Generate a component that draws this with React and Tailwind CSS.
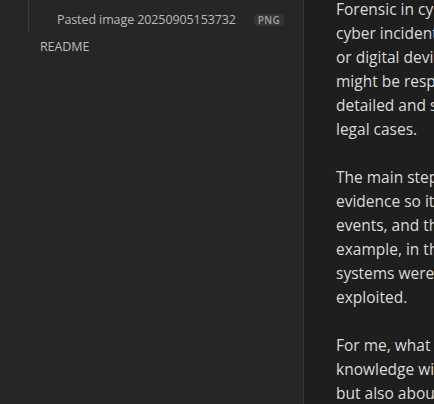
const paragraphs = [
  [
    'Forensic in cybersecurity is the process of investigating a',
    'cyber incident by collecting and analyzing evidence from systems',
    'or digital devices. The goal is to find out what happened, who',
    'might be responsible, and how it happened, while keeping a',
    'detailed and secure record so the evidence can be used in',
    'legal cases.',
  ],
  [
    'The main steps are identifying, preserving, and analyzing the',
    'evidence so it stays reliable, then reconstructing the timeline of',
    'events, and then reporting the findings clearly. For',
    'example, in the lab, we looked at logs to see which',
    'systems were accessed and how the vulnerability was',
    'exploited.',
  ],
  [
    'For me, what I learned is that forensics is not only about',
    'knowledge with tools and logs, and understanding systems,',
    'but also about patience, documentation and careful thinking.',
  ],
];

export default function App() {
  return (
    <div
      className="flex h-[404px] w-[434px] overflow-hidden bg-[#1e1e1e]"
      style={{ fontFamily: '"Open Sans", "Noto Sans", sans-serif' }}
    >
      {/* File explorer */}
      <aside className="w-[304px] shrink-0 border-r border-[#363636] bg-[#262626] text-[12.5px] tracking-[-0.1px] text-[#bababa]">
        <div className="ml-[28px] h-[32px] border-l border-[#3c3c3c] pt-[7px]">
          <div className="flex items-center py-1 pl-[28px] leading-[17px]">
            <span className="whitespace-nowrap">Pasted image 20250905153732</span>
            <span className="ml-auto mr-[19px] rounded-[4px] bg-[#353535] px-[4px] text-[10px] font-semibold leading-[12px] tracking-[0.3px] text-[#a0a0a0]">
              PNG
            </span>
          </div>
        </div>
        <div className="mt-[2px] py-1 pl-[40px] leading-[17px]">README</div>
      </aside>

      {/* Note content */}
      <main className="min-w-0 flex-1 overflow-hidden pl-[32px] text-[15.5px] leading-[24px] text-[#dadada]">
        <div className="-mt-[3px] flex flex-col gap-6">
          {paragraphs.map((lines, i) => (
            <p key={i}>
              {lines.map((line, j) => (
                <span key={j} className="block whitespace-nowrap">
                  {line}
                </span>
              ))}
            </p>
          ))}
        </div>
      </main>
    </div>
  );
}
